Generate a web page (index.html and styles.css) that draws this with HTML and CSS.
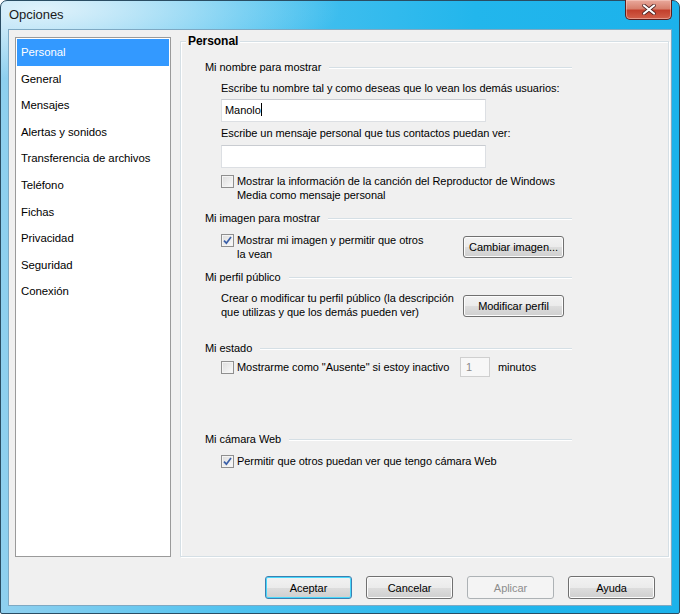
FILE: index.html
```html
<!DOCTYPE html>
<html lang="es">
<head>
    <meta charset="UTF-8">
    <title>Opciones</title>
    <link rel="stylesheet" href="styles.css">
</head>
<body>
    <div class="window">
        <div class="titlebar">
            <span class="title">Opciones</span>
            <button class="close" type="button">
                <svg width="14" height="11" viewBox="0 0 14 11">
                    <path d="M2 1.5 L12 9.5 M12 1.5 L2 9.5" stroke="#4a2020" stroke-width="3.6" stroke-linecap="round"/>
                    <path d="M2 1.5 L12 9.5 M12 1.5 L2 9.5" stroke="#ffffff" stroke-width="2.2" stroke-linecap="round"/>
                </svg>
            </button>
        </div>

        <div class="client">
            <div class="main">
                <ul class="nav">
                    <li class="selected">Personal</li>
                    <li>General</li>
                    <li>Mensajes</li>
                    <li>Alertas y sonidos</li>
                    <li>Transferencia de archivos</li>
                    <li>Teléfono</li>
                    <li>Fichas</li>
                    <li>Privacidad</li>
                    <li>Seguridad</li>
                    <li>Conexión</li>
                </ul>

                <div class="panel">
                    <div class="panel-title">Personal</div>

                    <div class="group g-name">
                        <div class="group-head"><span>Mi nombre para mostrar</span><div class="rule"></div></div>
                        <div class="indent">
                            <div class="label l-first">Escribe tu nombre tal y como deseas que lo vean los demás usuarios:</div>
                            <div class="textbox">Manolo<span class="caret"></span></div>
                            <div class="label l-second">Escribe un mensaje personal que tus contactos puedan ver:</div>
                            <div class="textbox tb-second"></div>
                            <div class="check-row cr-media">
                                <span class="checkbox"></span>
                                <span class="check-text">Mostrar la información de la canción del Reproductor de Windows<br>Media como mensaje personal</span>
                            </div>
                        </div>
                    </div>

                    <div class="group g-image">
                        <div class="group-head"><span>Mi imagen para mostrar</span><div class="rule"></div></div>
                        <div class="indent row">
                            <div class="check-row">
                                <span class="checkbox checked">
                                    <svg width="9" height="9" viewBox="0 0 9 9"><path d="M1 4.6 L3.4 7.2 L8 1" fill="none" stroke="#3a5fa8" stroke-width="1.7"/></svg>
                                </span>
                                <span class="check-text">Mostrar mi imagen y permitir que otros<br>la vean</span>
                            </div>
                            <button class="btn side-btn" type="button">Cambiar imagen...</button>
                        </div>
                    </div>

                    <div class="group g-profile">
                        <div class="group-head"><span>Mi perfil público</span><div class="rule"></div></div>
                        <div class="indent row">
                            <div class="plain-text">Crear o modificar tu perfil público (la descripción<br>que utilizas y que los demás pueden ver)</div>
                            <button class="btn side-btn btn-profile" type="button">Modificar perfil</button>
                        </div>
                    </div>

                    <div class="group g-status">
                        <div class="group-head"><span>Mi estado</span><div class="rule"></div></div>
                        <div class="indent status-row">
                            <div class="check-row">
                                <span class="checkbox"></span>
                                <span class="check-text">Mostrarme como "Ausente" si estoy inactivo</span>
                            </div>
                            <div class="minutes-box">1</div>
                            <span class="minutes">minutos</span>
                        </div>
                    </div>

                    <div class="group g-cam">
                        <div class="group-head"><span>Mi cámara Web</span><div class="rule"></div></div>
                        <div class="indent check-row">
                            <span class="checkbox checked">
                                <svg width="9" height="9" viewBox="0 0 9 9"><path d="M1 4.6 L3.4 7.2 L8 1" fill="none" stroke="#3a5fa8" stroke-width="1.7"/></svg>
                            </span>
                            <span class="check-text">Permitir que otros puedan ver que tengo cámara Web</span>
                        </div>
                    </div>
                </div>
            </div>

            <div class="footer">
                <button class="btn default" type="button">Aceptar</button>
                <button class="btn" type="button">Cancelar</button>
                <button class="btn disabled" type="button">Aplicar</button>
                <button class="btn" type="button">Ayuda</button>
            </div>
        </div>
    </div>
</body>
</html>
```

FILE: styles.css
```css
body {
    margin: 0;
    font-family: "Liberation Sans", Arial, sans-serif;
    font-size: 11px;
    letter-spacing: -0.05px;
    color: #000;
}

.window {
    width: 680px;
    height: 614px;
    box-sizing: border-box;
    border: 1px solid #2a4d63;
    border-radius: 7px 7px 2px 2px;
    padding: 0 7px 7px 7px;
    display: flex;
    flex-direction: column;
    background:
        radial-gradient(ellipse 300px 70px at 40px 8px, rgba(228, 244, 252, 0.95), rgba(228, 244, 252, 0) 100%),
        linear-gradient(to right, #8fd0ef 0%, #4fc2ef 35%, #22b6ec 70%, #1cb2eb 100%);
}

.titlebar {
    height: 28px;
    display: flex;
    align-items: flex-start;
    justify-content: space-between;
}

.title {
    font-size: 13px;
    line-height: 28px;
    padding-left: 1px;
    color: #1a1a1a;
}

.close {
    width: 47px;
    height: 20px;
    margin-top: -1px;
    padding: 0;
    border: 1px solid #5a1e1e;
    border-top: none;
    border-radius: 0 0 5px 5px;
    background: linear-gradient(to bottom, #e9a99c 0%, #d7806d 45%, #c3402d 55%, #d2604a 100%);
    box-shadow: inset 0 0 0 1px rgba(255, 220, 210, 0.45);
    display: flex;
    align-items: center;
    justify-content: center;
}

.client {
    flex: 1;
    background: #f0f0f0;
    border: 1px solid #7ea9c3;
    display: flex;
    flex-direction: column;
}

.main {
    display: flex;
    padding: 7px 0 0 6px;
}

.nav {
    list-style: none;
    margin: 0;
    padding: 1px;
    width: 156px;
    height: 520px;
    box-sizing: border-box;
    background: #fff;
    border: 1px solid #9a9a9a;
    font-size: 11.4px;
}

.nav li {
    height: 26.6px;
    line-height: 26px;
    padding-left: 4px;
    white-space: nowrap;
}

.nav li.selected {
    background: #3399ff;
    color: #fff;
}

.panel {
    width: 489px;
    height: 516px;
    box-sizing: border-box;
    margin: 4px 0 0 9px;
    border: 1px solid #d5dfe5;
    box-shadow: inset 1px 1px 0 #fff, 1px 1px 0 #fff;
}

.panel-title {
    width: fit-content;
    margin: -8px 0 0 5px;
    padding: 0 2px;
    background: #f0f0f0;
    font-weight: bold;
    font-size: 12px;
    line-height: 14px;
}

.group {
    width: 367px;
    margin-left: 24px;
}

.g-name { margin-top: 12px; }
.g-image { margin-top: 9px; }
.g-profile { margin-top: 9px; }
.g-status { margin-top: 22px; }
.g-cam { margin-top: 55px; }

.group-head {
    display: flex;
    align-items: center;
    line-height: 14px;
}

.rule {
    flex: 1;
    margin-left: 8px;
    margin-top: 1px;
    border-top: 1px solid #d5dfe5;
    border-bottom: 1px solid #fff;
}

.indent {
    margin-left: 16px;
}

.label {
    line-height: 14px;
    white-space: nowrap;
}

.l-first { margin-top: 7px; }
.l-second { margin-top: 4px; }

.textbox {
    width: 265px;
    height: 23px;
    box-sizing: border-box;
    margin-top: 4px;
    padding: 0 3px;
    line-height: 21px;
    background: #fff;
    border: 1px solid #dcdfe3;
    border-top-color: #c9ccd1;
}

.tb-second { margin-top: 5px; }

.caret {
    display: inline-block;
    width: 1px;
    height: 13px;
    background: #000;
    vertical-align: -2px;
}

.check-row {
    display: flex;
    align-items: flex-start;
}

.cr-media { margin-top: 6px; }

.checkbox {
    flex: none;
    width: 13px;
    height: 13px;
    box-sizing: border-box;
    margin-top: 1px;
    margin-right: 3px;
    border: 1px solid #8f8f8f;
    background: linear-gradient(135deg, #dcdcdc, #fbfbfb);
    box-shadow: inset 0 0 0 1px #f4f4f4;
    display: flex;
    align-items: center;
    justify-content: center;
}

.check-text {
    line-height: 14px;
    white-space: nowrap;
}

.row {
    display: flex;
    align-items: center;
    margin-top: 8px;
}

.g-profile .row { margin-top: 7px; }

.plain-text {
    line-height: 14px;
    white-space: nowrap;
}

.btn {
    font-family: inherit;
    font-size: 11px;
    letter-spacing: inherit;
    white-space: nowrap;
    color: #000;
    height: 23px;
    padding: 0;
    border: 1px solid #707070;
    border-radius: 3px;
    background: linear-gradient(to bottom, #f2f2f2 0%, #ebebeb 50%, #dddddd 51%, #cfcfcf 100%);
    box-shadow: inset 0 0 0 1px #fcfcfc;
}

.side-btn {
    width: 101px;
    height: 22px;
    margin-left: auto;
    margin-right: 8px;
}

.btn-profile {
    margin-top: 2px;
}

.status-row {
    display: flex;
    align-items: center;
    margin-top: 2px;
}

.status-row .check-row {
    width: 239px;
}

.minutes-box {
    width: 30px;
    height: 20px;
    box-sizing: border-box;
    padding-left: 5px;
    line-height: 18px;
    color: #8a8a8a;
    background: #f7f7f7;
    border: 1px solid #cfcfcf;
}

.minutes {
    margin-left: 8px;
    line-height: 14px;
}

.g-cam .check-row { margin-top: 8px; }

.footer {
    display: flex;
    justify-content: flex-end;
    gap: 14px;
    padding: 19px 16px 0 0;
}

.footer .btn {
    width: 87px;
}

.btn.default {
    border-color: #3c7fb1;
    box-shadow: inset 0 0 0 1px #48d8fb;
}

.btn.disabled {
    color: #8d8d8d;
    border-color: #adb2b5;
    background: #f4f4f4;
    box-shadow: none;
}
```
